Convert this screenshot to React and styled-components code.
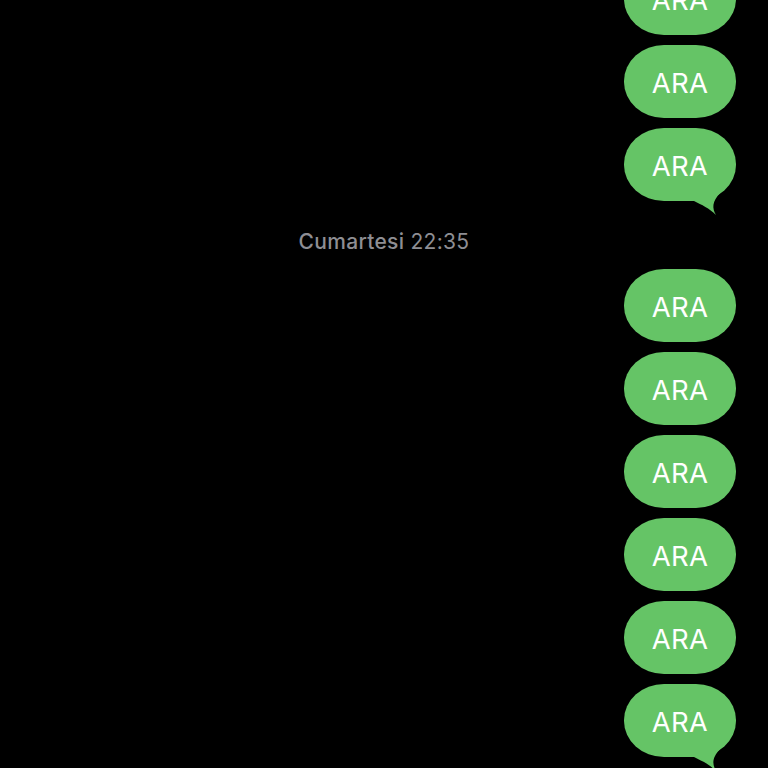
import React from "react";
import styled, { createGlobalStyle } from "styled-components";

const Global = createGlobalStyle`
  html, body { margin: 0; padding: 0; background: #000; }
  body { font-family: Inter, "Noto Sans", sans-serif; }
`;

const Screen = styled.div`
  width: 768px;
  height: 768px;
  background: #000;
  overflow: hidden;
`;

const Thread = styled.div`
  display: flex;
  flex-direction: column;
  margin-top: -38px;
  padding-right: 32px;
`;

const Group = styled.div`
  display: flex;
  flex-direction: column;
  align-items: flex-end;
  gap: 10px;
`;

const Bubble = styled.div`
  position: relative;
  box-sizing: border-box;
  width: 112px;
  height: 73px;
  padding-top: 2px;
  border-radius: 40px / 36px;
  background: #65c466;
  color: #fff;
  display: flex;
  align-items: center;
  justify-content: center;
  font-size: 27.5px;
  font-weight: 400;
  letter-spacing: 0.3px;
`;

const Tail = styled.svg`
  position: absolute;
  right: 12px;
  bottom: -14px;
  width: 30px;
  height: 40px;
  overflow: visible;
`;

const Stamp = styled.div`
  text-align: center;
  padding: 29px 0 15px 32px;
  font-size: 21px;
  line-height: 24px;
  color: #8e8e93;
  letter-spacing: 0.3px;
`;

const Day = styled.span`
  font-weight: 500;
`;

const Time = styled.span`
  font-weight: 400;
`;

function Msg({ tail }) {
  return (
    <Bubble>
      ARA
      {tail && (
        <Tail viewBox="0 0 30 40">
          <path d="M0 20 L0 26 C8 30 15 33 22 40 C18 33 18 27 26 18 L26 0 L0 0 Z" fill="#65c466" />
        </Tail>
      )}
    </Bubble>
  );
}

export default function App() {
  return (
    <Screen>
      <Global />
      <Thread>
        <Group>
          <Msg />
          <Msg />
          <Msg tail />
        </Group>
        <Stamp>
          <Day>Cumartesi</Day> <Time>22:35</Time>
        </Stamp>
        <Group>
          <Msg />
          <Msg />
          <Msg />
          <Msg />
          <Msg />
          <Msg tail />
        </Group>
      </Thread>
    </Screen>
  );
}
